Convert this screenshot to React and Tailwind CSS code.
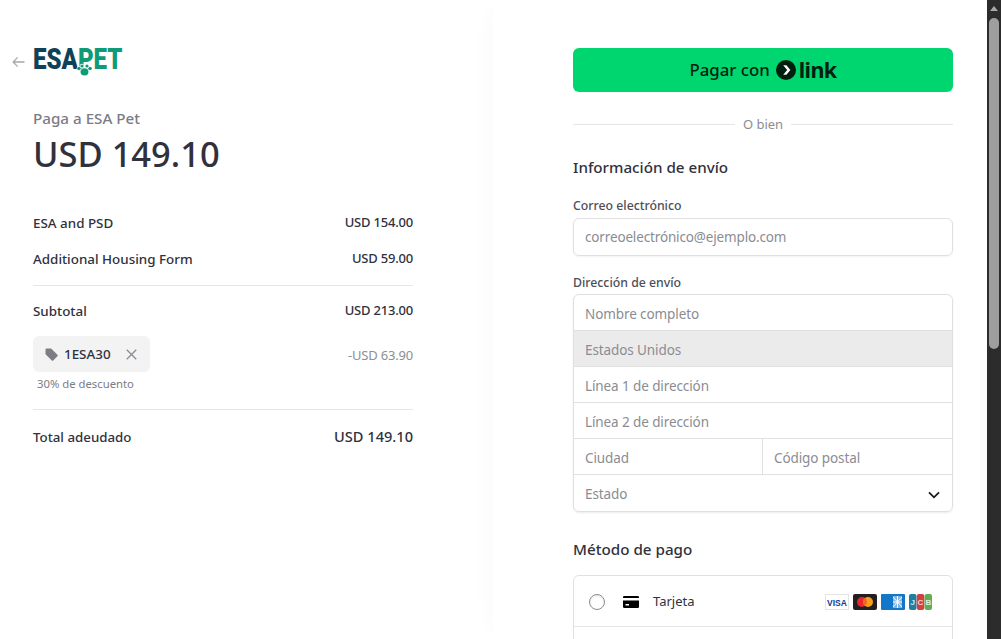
import React from "react";

const F = { fontFamily: '"Noto Sans", "Open Sans", "Liberation Sans", sans-serif' };

function Row({ label, value, className = "" }) {
  return (
    <div className={`flex items-center justify-between h-5 text-[13.4px] font-medium text-[#30313d] ${className}`}>
      <span>{label}</span>
      <span className="text-[13px] tracking-[-0.2px]">{value}</span>
    </div>
  );
}

function Logo() {
  return (
    <div className="relative h-[32px] w-[90px]">
      <div
        className="absolute left-0 top-[-3px] origin-left scale-x-[0.83] whitespace-nowrap text-[29px] leading-[32px] font-black"
        style={{ fontFamily: 'Roboto, sans-serif' }}
      >
        <span className="text-[#0f4257]">ESA</span>
        <span className="text-[#0f9b78]">PET</span>
      </div>
      <svg className="absolute left-[43px] top-[17px]" width="17" height="13" viewBox="0 0 17 13">
        <g fill="#0f9b78" stroke="#fff" strokeWidth="1.2" paintOrder="stroke">
          <ellipse cx="8.500" cy="8.800" rx="4" ry="3.600" />
          <circle cx="3" cy="5.500" r="1.800" />
          <circle cx="14" cy="5.500" r="1.800" />
          <circle cx="6" cy="3" r="1.600" />
          <circle cx="11" cy="3" r="1.600" />
        </g>
      </svg>
    </div>
  );
}

function Left() {
  return (
    <section className="relative w-[493px] shrink-0 pl-[33px] pr-[80px] pt-[46px]">
      <svg className="absolute left-[12px] top-[56px]" width="13" height="12" viewBox="0 0 13 12" fill="none" stroke="#a8a8ac" strokeWidth="1.3">
        <path d="M12.5 6H1.2M5.6 1.4 1.2 6l4.4 4.6" />
      </svg>
      <Logo />
      <div className="mt-[30px] text-[15.2px] leading-5 font-medium text-[#7b7c85]">Paga a ESA Pet</div>
      <div className="mt-[4px] text-[34.5px] leading-[44px] font-medium text-[#30313d]">USD 149.10</div>
      <div className="mt-[37px] flex flex-col gap-4">
        <Row label="ESA and PSD" value="USD 154.00" />
        <Row label="Additional Housing Form" value="USD 59.00" />
      </div>
      <div className="mt-[16px] h-px bg-[#e6e6e6]" />
      <Row label="Subtotal" value="USD 213.00" className="mt-[15px]" />
      <div className="mt-[15px] flex items-start justify-between">
        <div>
          <div className="flex items-center h-9 w-[117px] rounded-md bg-[#f3f3f4] pl-3 text-[13.4px] font-medium text-[#30313d]">
            <svg width="13" height="13" viewBox="0 0 13 13" fill="#7d7e85">
              <path d="M.5 1.5A1 1 0 0 1 1.5.5h4.2a1 1 0 0 1 .7.3l6 6a1 1 0 0 1 0 1.4l-4.2 4.3a1 1 0 0 1-1.4 0l-6-6a1 1 0 0 1-.3-.7z" />
            </svg>
            <span className="ml-[6px]">1ESA30</span>
            <svg className="ml-[15px]" width="11" height="11" viewBox="0 0 10 10" stroke="#8b8c93" strokeWidth="1.2">
              <path d="M.7.7l8.6 8.6M9.3.7.7 9.3" />
            </svg>
          </div>
          <div className="mt-[4px] pl-1 text-[11.3px] leading-4 text-[#7b7c85]">30% de descuento</div>
        </div>
        <span className="mt-[9px] text-[13px] leading-5 tracking-[-0.2px] text-[#8d8e96]">-USD 63.90</span>
      </div>
      <div className="mt-[17px] h-px bg-[#e6e6e6]" />
      <div className="mt-[17px] flex items-center justify-between h-5 font-medium text-[#30313d]">
        <span className="text-[13.3px] pt-[1px]">Total adeudado</span>
        <span className="text-[14.6px]">USD 149.10</span>
      </div>
    </section>
  );
}

function Cell({ children, className = "" }) {
  return <div className={`flex items-center h-9 pl-[11px] pr-3 pt-[3px] text-[13.5px] tracking-[-0.1px] text-[#8b8c93] ${className}`}>{children}</div>;
}

function CardIcons() {
  return (
    <div className="flex items-center gap-[4px]">
      <svg width="24" height="16" viewBox="0 0 24 16">
        <rect x=".5" y=".5" width="23" height="15" fill="#fff" stroke="#e3e3e8" />
        <text x="12" y="11.500" textAnchor="middle" fontSize="8.500" fontWeight="800" fill="#1a3a8f" fontFamily="Liberation Sans, sans-serif">VISA</text>
      </svg>
      <svg width="24" height="16" viewBox="0 0 24 16">
        <rect width="24" height="16" rx="2" fill="#231f20" />
        <circle cx="9" cy="8" r="5" fill="#e8272c" />
        <circle cx="15" cy="8" r="5" fill="#f79e1b" />
        <path d="M12 4a5 5 0 0 1 0 8 5 5 0 0 1 0-8z" fill="#f26522" />
      </svg>
      <svg width="24" height="16" viewBox="0 0 24 16">
        <rect width="24" height="16" rx="1" fill="#1377c9" />
        <rect x="12" y="2" width="9" height="12" fill="#7fb6e6" />
        <path d="M12 3l9 10M21 3l-9 10M16.500 2v12M12 8h9" stroke="#fff" strokeWidth="1" />
      </svg>
      <svg width="23" height="16" viewBox="0 0 23 16">
        <rect width="7.500" height="16" rx="2" fill="#1e7f9e" />
        <rect x="7.800" width="7.500" height="16" rx="2" fill="#d2403f" />
        <rect x="15.600" width="7.400" height="16" rx="2" fill="#5fae57" />
        <text x="3.700" y="11" textAnchor="middle" fontSize="8" fontWeight="700" fill="#cfe6ee" fontFamily="Liberation Sans, sans-serif">J</text>
        <text x="11.500" y="11" textAnchor="middle" fontSize="8" fontWeight="700" fill="#f5d0d0" fontFamily="Liberation Sans, sans-serif">C</text>
        <text x="19.300" y="11" textAnchor="middle" fontSize="8" fontWeight="700" fill="#dcf0d8" fontFamily="Liberation Sans, sans-serif">B</text>
      </svg>
    </div>
  );
}

function Right() {
  return (
    <section className="relative w-[494px] shrink-0 pl-[80px] pr-[34px] pt-[48px] bg-white shadow-[-12px_0_24px_-12px_rgba(0,0,0,0.03)]">
      <div className="flex items-center justify-center h-11 rounded-md bg-[#00d66f] text-[#011e0f]">
        <span className="text-[16.8px] font-medium">Pagar con</span>
        <svg className="ml-[6px]" width="20" height="20" viewBox="0 0 20 20">
          <circle cx="10" cy="10" r="10" fill="#011e0f" />
          <path d="M7.2 5.2h3.2l4 4.800-4 4.800H7.2l4-4.800z" fill="#fff" />
        </svg>
        <span className="ml-[3px] text-[21.5px] leading-none font-bold tracking-[-0.6px]">link</span>
      </div>
      <div className="mt-[22px] flex items-center h-5">
        <div className="flex-1 h-px bg-[#e6e6e6]" />
        <span className="px-2 pt-[2px] text-[13px] text-[#8b8c93]">O bien</span>
        <div className="flex-1 h-px bg-[#e6e6e6]" />
      </div>
      <h2 className="mt-[21px] text-[15.2px] leading-6 font-medium text-[#30313d]">Información de envío</h2>
      <div className="mt-[19px] text-[12.3px] leading-4 font-medium text-[#4d4e58]">Correo electrónico</div>
      <div className="mt-[4px] flex items-center h-[38px] pl-[11px] pr-3 rounded-md border border-[#e0e0e0] shadow-[0_1px_2px_rgba(0,0,0,0.05)] text-[13.5px] tracking-[-0.15px] text-[#8b8c93]">
        correoelectrónico@ejemplo.com
      </div>
      <div className="mt-[19px] text-[12.3px] leading-4 font-medium text-[#4d4e58]">Dirección de envío</div>
      <div className="mt-[3px] rounded-md border border-[#e0e0e0] shadow-[0_1px_2px_rgba(0,0,0,0.08)] divide-y divide-[#e0e0e0]">
        <Cell>Nombre completo</Cell>
        <Cell className="bg-[#ebebeb]">Estados Unidos</Cell>
        <Cell>Línea 1 de dirección</Cell>
        <Cell>Línea 2 de dirección</Cell>
        <div className="flex h-9 divide-x divide-[#e0e0e0]">
          <Cell className="w-[189px]">Ciudad</Cell>
          <Cell className="flex-1">Código postal</Cell>
        </div>
        <Cell className="justify-between">
          <span>Estado</span>
          <svg width="12" height="8" viewBox="0 0 12 8" fill="none" stroke="#1a1a1a" strokeWidth="1.8">
            <path d="M1 1.300 6 6.300l5-5" />
          </svg>
        </Cell>
      </div>
      <h2 className="mt-[25px] text-[15.2px] leading-6 font-medium text-[#30313d]">Método de pago</h2>
      <div className="mt-[14px] h-[100px] rounded-md border border-[#e0e0e0]">
        <div className="flex items-center h-[51px] pl-[15px] pr-[20px] pt-[1px] border-b border-[#e6e6e6]">
          <span className="size-4 rounded-full border border-[#8b8c93] bg-white shadow-[inset_0_1px_2px_rgba(0,0,0,0.1)]" />
          <svg className="ml-[18px]" width="16" height="12" viewBox="0 0 16 12">
            <path d="M0 1.200A1.200 1.200 0 0 1 1.200 0h13.600A1.200 1.200 0 0 1 16 1.200V2H0zM0 4.500h16v6.300a1.200 1.200 0 0 1-1.200 1.200H1.200A1.200 1.200 0 0 1 0 10.800zM2.500 8v1.500H6V8z" fill="#000" fillRule="evenodd" />
          </svg>
          <span className="ml-[14px] text-[13px] text-[#30313d]">Tarjeta</span>
          <div className="ml-auto"><CardIcons /></div>
        </div>
      </div>
    </section>
  );
}

export default function App() {
  return (
    <div className="flex h-screen overflow-hidden bg-white" style={F}>
      <main className="flex flex-1 min-w-0 overflow-hidden">
        <Left />
        <Right />
      </main>
      <div className="w-[14px] shrink-0 flex flex-col items-center bg-[#2c2c2c]">
        <svg className="mt-[6px]" width="8" height="5" viewBox="0 0 8 5"><path d="M4 0l4 5H0z" fill="#a8a8a8" /></svg>
        <div className="mt-[7px] w-[10px] h-[331px] rounded-full bg-[#9e9e9e]" />
      </div>
    </div>
  );
}
